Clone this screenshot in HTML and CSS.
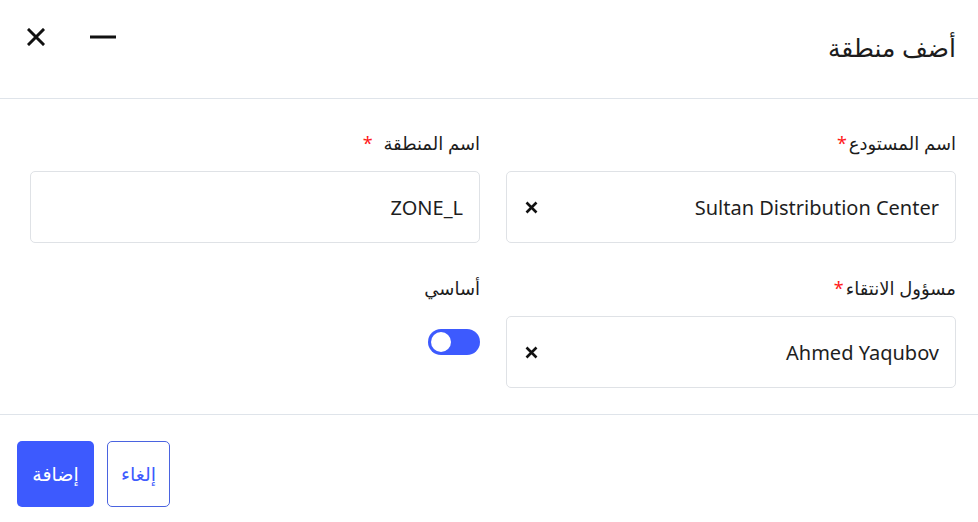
FILE: index.html
```html
<!DOCTYPE html>
<html lang="ar" dir="rtl">
<head>
<meta charset="utf-8">
<link rel="stylesheet" href="styles.css">
</head>
<body>
<div class="dialog">
  <header class="head">
    <h1 class="title">أضف منطقة</h1>
    <div class="head-actions">
      <span class="icon-btn minus"><svg width="26" height="4" viewBox="0 0 26 4"><rect x="0" y="0.5" width="26" height="3" fill="#111"/></svg></span>
      <span class="icon-btn close"><svg width="18" height="18" viewBox="0 0 18 18"><path d="M2 2L16 16M16 2L2 16" stroke="#111" stroke-width="3" stroke-linecap="square"/></svg></span>
    </div>
  </header>
  <main class="form">
    <div class="field">
      <label class="label">اسم المستودع<span class="req">*</span></label>
      <div class="input"><span class="value">Sultan Distribution Center</span><span class="clear"><svg width="13" height="13" viewBox="0 0 13 13"><path d="M1.5 1.5L11.5 11.5M11.5 1.5L1.5 11.5" stroke="#111" stroke-width="2.6"/></svg></span></div>
    </div>
    <div class="field">
      <label class="label">اسم المنطقة <span class="req wide">*</span></label>
      <div class="input"><span class="value plain">ZONE_L</span></div>
    </div>
    <div class="field">
      <label class="label">مسؤول الانتقاء<span class="req">*</span></label>
      <div class="input"><span class="value">Ahmed Yaqubov</span><span class="clear"><svg width="13" height="13" viewBox="0 0 13 13"><path d="M1.5 1.5L11.5 11.5M11.5 1.5L1.5 11.5" stroke="#111" stroke-width="2.6"/></svg></span></div>
    </div>
    <div class="field">
      <label class="label">أساسي</label>
      <div class="toggle-row"><span class="toggle"><span class="knob"></span></span></div>
    </div>
  </main>
  <footer class="foot">
    <button class="btn btn-outline">إلغاء</button>
    <button class="btn btn-primary">إضافة</button>
  </footer>
</div>
</body>
</html>
```
FILE: styles.css
```css
* { box-sizing: border-box; }
html, body { margin: 0; padding: 0; background: #fff; }
body {
  font-family: "Noto Sans", "DejaVu Sans", sans-serif;
  color: #1c1c1c;
  width: 978px;
  height: 522px;
  overflow: hidden;
}
.dialog { display: flex; flex-direction: column; }
.head {
  height: 99px;
  border-bottom: 1px solid #dfe4ea;
  display: flex;
  align-items: flex-start;
  justify-content: space-between;
  padding: 0 22px 0 26px;
}
.title {
  margin: 30px 0 0;
  font-size: 25px;
  font-weight: 400;
  line-height: 34px;
}
.head-actions { display: flex; gap: 44px; align-items: center; margin-top: 27px; }
.icon-btn { display: flex; align-items: center; justify-content: center; }
.close { width: 20px; height: 20px; }
.minus { width: 26px; height: 20px; }
.form {
  display: grid;
  grid-template-columns: 450px 450px;
  column-gap: 26px;
  row-gap: 32px;
  padding: 31px 22px 26px 30px;
  border-bottom: 1px solid #dfe4ea;
}
.field { display: flex; flex-direction: column; }
.label {
  font-size: 18px;
  line-height: 26px;
  height: 26px;
  margin-bottom: 15px;
}
.req { color: #ff1a1a; margin-right: 2px; }
.req.wide { margin-right: 6px; }
.input {
  height: 72px;
  border: 1px solid #dfe2e6;
  border-radius: 5px;
  display: flex;
  align-items: center;
  justify-content: space-between;
  padding: 0 16px 0 18px;
}
.value { font-size: 20px; color: #1e1e1e; direction: ltr; }
.clear { display: flex; }
.toggle-row { display: flex; padding-top: 13px; }
.toggle {
  width: 52px;
  height: 26px;
  border-radius: 13px;
  background: #3d5afe;
  display: flex;
  justify-content: flex-end;
  align-items: center;
  padding: 0 3px;
}
.knob { width: 20px; height: 20px; border-radius: 50%; background: #fff; }
.foot {
  display: flex;
  gap: 13px;
  justify-content: flex-end;
  padding: 26px 17px 0;
}
.btn {
  height: 66px;
  border-radius: 5px;
  font-family: "Noto Sans", "DejaVu Sans", sans-serif;
  font-size: 19px;
  padding: 0;
  cursor: pointer;
}
.btn-outline { width: 63px; background: #fff; color: #3d5afe; border: 1px solid #4a63e0; }
.btn-primary { width: 77px; background: #3d5afe; color: #fff; border: none; }
```
